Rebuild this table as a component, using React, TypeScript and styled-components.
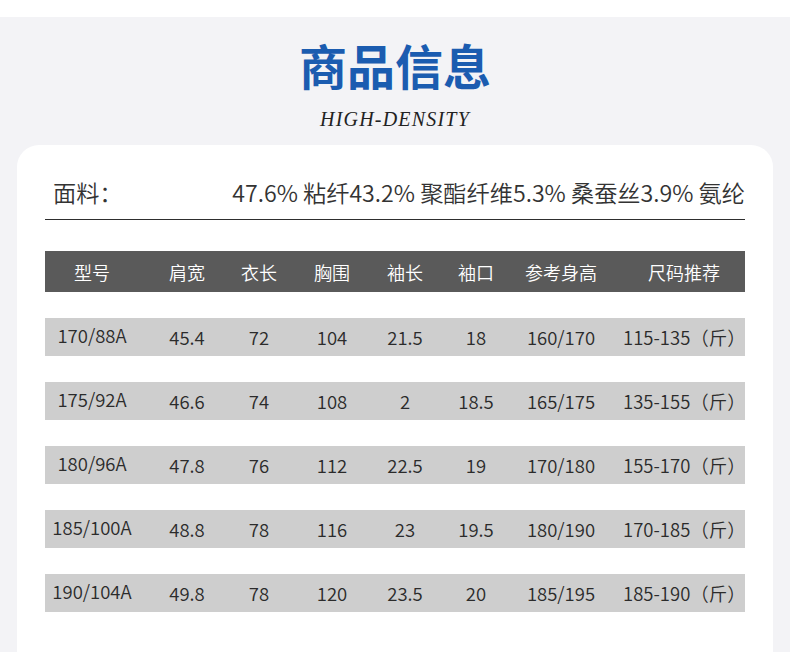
import React from "react";
import styled, { createGlobalStyle } from "styled-components";

const GlobalStyle = createGlobalStyle`
  html, body {
    margin: 0;
    padding: 0;
    background: #f3f3f6;
  }
  body {
    font-family: "Noto Sans CJK SC", "Noto Sans", sans-serif;
  }
`;

const Page = styled.div`
  width: 790px;
  height: 652px;
  overflow: hidden;
  background: #f3f3f6;
`;

const TopStrip = styled.div`
  height: 17px;
  background: #ffffff;
`;

const Hero = styled.header`
  display: flex;
  flex-direction: column;
  align-items: center;
  padding-top: 19px;
  height: 128px;
  box-sizing: border-box;
`;

const Title = styled.h1`
  margin: 0;
  font-family: "Noto Sans CJK SC", sans-serif;
  font-size: 48px;
  line-height: 56px;
  font-weight: 700;
  color: #1b5cb0;
`;

const Subtitle = styled.div`
  margin-top: 16px;
  font-family: "Liberation Serif", serif;
  font-style: italic;
  font-size: 20px;
  line-height: 22px;
  letter-spacing: 1.2px;
  color: #222222;
`;

const Card = styled.section`
  margin: 0 17px;
  height: 520px;
  background: #ffffff;
  border-radius: 22px 22px 0 0;
  padding: 24px 28px 0;
`;

const FabricRow = styled.div`
  display: flex;
  align-items: center;
  justify-content: space-between;
  height: 51px;
  box-sizing: border-box;
  padding: 0 0 5px 8px;
  border-bottom: 1px solid #2e2e2e;
  font-size: 23.2px;
  font-weight: 350;
  color: #333333;
`;

const Table = styled.div`
  margin-top: 31px;
  display: flex;
  flex-direction: column;
  gap: 26px;
`;

const COLUMNS = "94px 96px 48px 98px 48px 94px 76px 1fr";

const HeadRow = styled.div`
  display: grid;
  grid-template-columns: ${COLUMNS};
  align-items: center;
  height: 41px;
  background: #5a5a5a;
  color: #ffffff;
  font-size: 18px;
  font-weight: 350;
`;

const DataRow = styled.div`
  display: grid;
  grid-template-columns: ${COLUMNS};
  align-items: center;
  height: 38px;
  background: #cecece;
  color: #2b2b2b;
  font-size: 18.5px;
  font-weight: 350;
`;

const Cell = styled.div<{ $last?: boolean; $lift?: boolean }>`
  text-align: center;
  white-space: nowrap;
  padding-left: ${(p) => (p.$last ? "24px" : "0")};
  padding-bottom: ${(p) => (p.$lift ? "5px" : "0")};
`;

const HEADERS = ["型号", "肩宽", "衣长", "胸围", "袖长", "袖口", "参考身高", "尺码推荐"];

const ROWS = [
  ["170/88A", "45.4", "72", "104", "21.5", "18", "160/170", "115-135（斤）"],
  ["175/92A", "46.6", "74", "108", "2", "18.5", "165/175", "135-155（斤）"],
  ["180/96A", "47.8", "76", "112", "22.5", "19", "170/180", "155-170（斤）"],
  ["185/100A", "48.8", "78", "116", "23", "19.5", "180/190", "170-185（斤）"],
  ["190/104A", "49.8", "78", "120", "23.5", "20", "185/195", "185-190（斤）"],
];

export default function App() {
  return (
    <Page>
      <GlobalStyle />
      <TopStrip />
      <Hero>
        <Title>商品信息</Title>
        <Subtitle>HIGH-DENSITY</Subtitle>
      </Hero>
      <Card>
        <FabricRow>
          <span>面料：</span>
          <span>47.6% 粘纤43.2% 聚酯纤维5.3% 桑蚕丝3.9% 氨纶</span>
        </FabricRow>
        <Table>
          <HeadRow>
            {HEADERS.map((h, i) => (
              <Cell key={h} $last={i === HEADERS.length - 1}>
                {h}
              </Cell>
            ))}
          </HeadRow>
          {ROWS.map((row) => (
            <DataRow key={row[0]}>
              {row.map((v, i) => (
                <Cell key={i} $last={i === row.length - 1} $lift={i === 0}>
                  {v}
                </Cell>
              ))}
            </DataRow>
          ))}
        </Table>
      </Card>
    </Page>
  );
}
